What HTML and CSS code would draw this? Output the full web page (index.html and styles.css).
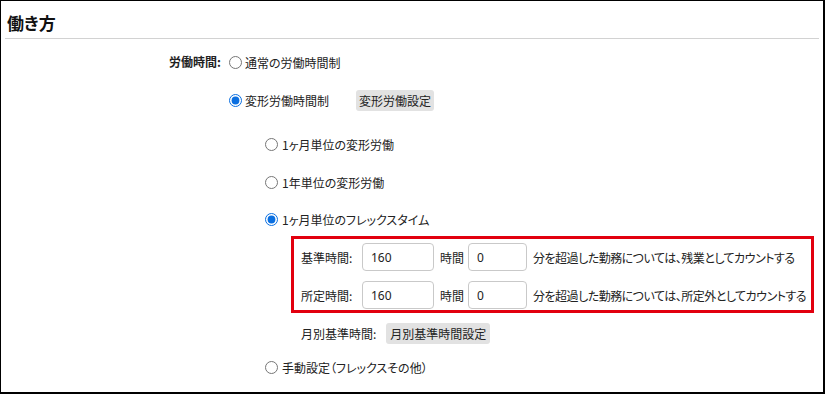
FILE: index.html
```html
<!DOCTYPE html>
<html lang="ja">
<head>
<meta charset="utf-8">
<title>働き方</title>
<link rel="stylesheet" href="styles.css">
</head>
<body>
<div class="frame">
  <h2 class="title">働き方</h2>
  <div class="field">
    <div class="flabel">労働時間:</div>
    <div class="opts">
      <label class="opt first"><input type="radio" name="wt"><span>通常の労働時間制</span></label>
      <div class="opt second">
        <label class="optin"><input type="radio" name="wt" checked><span>変形労働時間制</span></label>
        <button class="btn btn-henkei" type="button">変形労働設定</button>
      </div>
      <div class="nested">
        <label class="opt n1"><input type="radio" name="ht"><span>1ヶ月単位の変形労働</span></label>
        <label class="opt n2"><input type="radio" name="ht"><span>1年単位の変形労働</span></label>
        <label class="opt n3"><input type="radio" name="ht" checked><span>1ヶ月単位のフレックスタイム</span></label>
        <div class="redbox">
          <div class="hrow">
            <span class="hlabel">基準時間:</span>
            <input class="inp inp-h" type="text" value="160">
            <span class="unit">時間</span>
            <input class="inp inp-m" type="text" value="0">
            <span class="desc">分を超過した勤務については、残業としてカウントする</span>
          </div>
          <div class="hrow">
            <span class="hlabel">所定時間:</span>
            <input class="inp inp-h" type="text" value="160">
            <span class="unit">時間</span>
            <input class="inp inp-m" type="text" value="0">
            <span class="desc">分を超過した勤務については、所定外としてカウントする</span>
          </div>
        </div>
        <div class="monthly">
          <span class="mlabel">月別基準時間:</span>
          <button class="btn btn-month" type="button">月別基準時間設定</button>
        </div>
        <label class="opt n4"><input type="radio" name="ht"><span>手動設定（フレックスその他）</span></label>
      </div>
    </div>
  </div>
</div>
</body>
</html>
```

FILE: styles.css
```css
html, body {
  margin: 0;
  padding: 0;
  background: #fff;
}
body {
  font-family: "Noto Sans CJK JP", "Noto Sans", sans-serif;
  font-feature-settings: "palt";
  font-size: 12px;
  color: #222;
}
.frame {
  width: 825px;
  height: 394px;
  box-sizing: border-box;
  border-top: 1px solid #000;
  border-left: 1px solid #000;
  border-right: 2px solid #000;
  border-bottom: 2px solid #000;
  overflow: hidden;
}
.title {
  margin: 0 4px;
  padding: 9px 0 0 2px;
  height: 28px;
  line-height: 26px;
  font-size: 17px;
  font-weight: bold;
  color: #111;
  border-bottom: 1px solid #d2d2d2;
}
.field {
  display: grid;
  grid-template-columns: 220px 1fr;
  column-gap: 8px;
}
.flabel {
  margin-top: 12px;
  height: 22px;
  line-height: 22px;
  text-align: right;
  font-weight: bold;
  color: #222;
}
.opt, .optin {
  display: flex;
  align-items: center;
  height: 22px;
  white-space: nowrap;
}
.opt input, .optin input {
  margin: 0 3px 0 0;
  width: 13px;
  height: 13px;
  flex-shrink: 0;
  accent-color: #0b6fe0;
}
.first { margin-top: 12px; }
.second { margin-top: 16px; }
.btn {
  font-family: inherit;
  font-feature-settings: "palt";
  font-size: 12px;
  color: #222;
  background: #e2e2e2;
  border: none;
  border-radius: 3px;
  height: 21px;
  padding: 0 3px;
  line-height: 21px;
  white-space: nowrap;
  flex-shrink: 0;
}
.btn-henkei {
  margin-left: 27px;
}
.nested {
  padding-left: 36px;
}
.n1 { margin-top: 22px; }
.n2 { margin-top: 16px; }
.n3 { margin-top: 15px; }
.opt.n1 input, .opt.n2 input, .opt.n3 input, .opt.n4 input {
  margin-right: 4px;
}
.redbox {
  margin: 6px 0 0 26px;
  width: 523px;
  box-sizing: border-box;
  border: 3px solid #e2000f;
  padding: 4px 0 1px 7px;
  display: flex;
  flex-direction: column;
  gap: 10px;
}
.hrow {
  display: flex;
  align-items: center;
  height: 28px;
  white-space: nowrap;
}
.hrow > * {
  flex-shrink: 0;
}
.hlabel {
  width: 61px;
}
.inp {
  box-sizing: border-box;
  height: 28px;
  border: 1px solid #c9c9c9;
  border-radius: 4px;
  padding: 0 0 0 8px;
  font-family: "Noto Sans", sans-serif;
  font-size: 12px;
  color: #222;
  background: #fff;
  outline: none;
  margin: 0;
}
.inp-h { width: 72px; }
.inp-m { width: 59px; }
.unit {
  margin: 0 4px 0 6px;
  width: 24px;
}
.desc {
  margin-left: 6px;
  letter-spacing: -0.5px;
}
.monthly {
  display: flex;
  align-items: center;
  height: 22px;
  margin: 9px 0 0 36px;
  white-space: nowrap;
}
.btn-month {
  margin-left: 10px;
  padding: 0 4px;
}
.n4 { margin-top: 12px; }
```
